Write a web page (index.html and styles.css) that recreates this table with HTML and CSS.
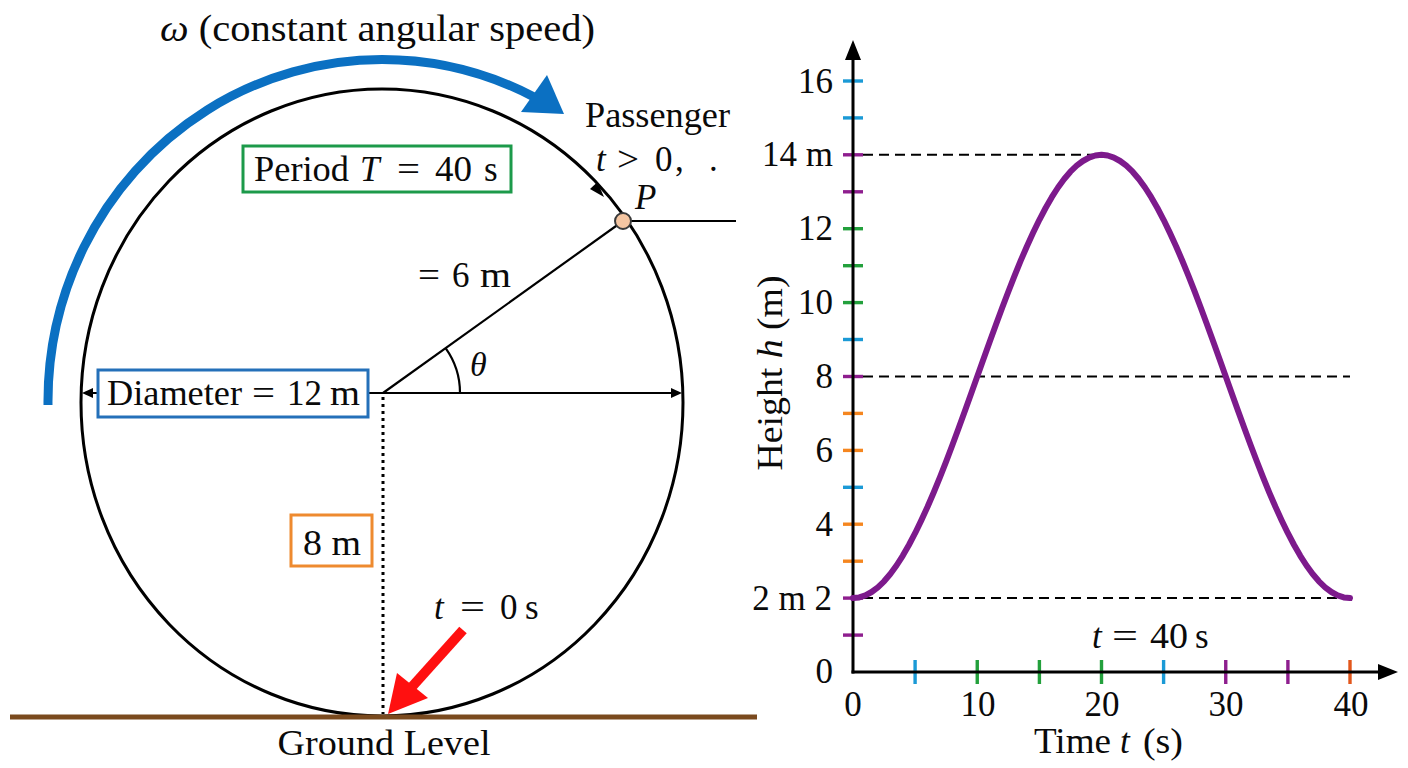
FILE: index.html
```html
<!DOCTYPE html>
<html lang="en">
<head>
<meta charset="utf-8">
<title>Ferris wheel height model</title>
<link rel="stylesheet" href="styles.css">
</head>
<body>
<div class="figure">
<svg class="canvas" width="1408" height="768" viewBox="0 0 1408 768" xmlns="http://www.w3.org/2000/svg">
  <!-- ===== Left: wheel ===== -->
  <text class="lbl title" x="160" y="41" textLength="435" lengthAdjust="spacingAndGlyphs"><tspan class="it">ω</tspan> (constant angular speed)</text>

  <path class="blue-arc" d="M 48 405 A 334 342 0 0 1 536 98"/>
  <polygon class="blue-fill" points="564,114 521,112 547,75"/>

  <ellipse class="wheel" cx="382" cy="402.5" rx="301" ry="313.5"/>
  <polygon class="black-fill" points="604,197 590,189 597.5,182"/>

  <line class="thin" x1="383" y1="393" x2="623" y2="221"/>
  <line class="thin" x1="631" y1="221" x2="736" y2="221"/>
  <path class="thin" d="M 460 393 A 77 77 0 0 0 445.6 348.2"/>

  <line class="thin" x1="90" y1="393" x2="674" y2="393"/>
  <polygon class="black-fill" points="82,393 93,388 93,398"/>
  <polygon class="black-fill" points="682,393 671,388 671,398"/>

  <line class="dotted" x1="383" y1="397" x2="383" y2="714"/>

  <circle class="pass" cx="623" cy="221" r="8"/>

  <!-- Period box -->
  <rect class="box box-green" x="243" y="146" width="268" height="46"/>
  <g class="lbl">
    <text x="254" y="181" textLength="95" lengthAdjust="spacingAndGlyphs">Period</text>
    <text class="it" x="360" y="181">T</text>
    <text x="397" y="181" textLength="23" lengthAdjust="spacingAndGlyphs">=</text>
    <text x="435" y="181" textLength="37" lengthAdjust="spacingAndGlyphs">40</text>
    <text x="484" y="181">s</text>
  </g>

  <!-- Diameter box -->
  <rect class="box box-blue" x="98" y="370" width="270" height="47"/>
  <g class="lbl">
    <text x="107" y="405" textLength="135" lengthAdjust="spacingAndGlyphs">Diameter</text>
    <text x="252" y="405" textLength="23" lengthAdjust="spacingAndGlyphs">=</text>
    <text x="287" y="405">12</text>
    <text x="330" y="405" textLength="30" lengthAdjust="spacingAndGlyphs">m</text>
  </g>

  <!-- 8 m box -->
  <rect class="box box-orange" x="291" y="515" width="81" height="51"/>
  <text class="lbl mid" x="332" y="555" textLength="58" lengthAdjust="spacingAndGlyphs">8 m</text>

  <!-- passenger labels -->
  <text class="lbl" x="585" y="127" textLength="145" lengthAdjust="spacingAndGlyphs">Passenger</text>
  <g class="lbl">
    <text class="it" x="596" y="171">t</text>
    <text x="617" y="171" textLength="22" lengthAdjust="spacingAndGlyphs">&gt;</text>
    <text x="655" y="171">0</text>
    <text x="675" y="171">,</text>
    <text x="709" y="171">.</text>
  </g>
  <text class="lbl it" x="635" y="209">P</text>

  <g class="lbl">
    <text x="418" y="287" textLength="22" lengthAdjust="spacingAndGlyphs">=</text>
    <text x="452" y="287">6</text>
    <text x="480" y="287" textLength="31" lengthAdjust="spacingAndGlyphs">m</text>
  </g>
  <text class="lbl it theta" x="470" y="376">θ</text>

  <!-- t = 0 s + red arrow -->
  <g class="lbl">
    <text class="it" x="434" y="619">t</text>
    <text x="460" y="619" textLength="25" lengthAdjust="spacingAndGlyphs">=</text>
    <text x="500" y="619">0</text>
    <text x="525" y="619">s</text>
  </g>
  <line class="red-shaft" x1="463" y1="630" x2="410" y2="689"/>
  <polygon class="red-fill" points="388,714 397,673 428,698"/>

  <line class="ground" x1="10" y1="717" x2="757" y2="717"/>
  <text class="lbl mid" x="384" y="755" textLength="213" lengthAdjust="spacingAndGlyphs">Ground Level</text>

  <!-- ===== Right: graph ===== -->
  <line class="dash" x1="863" y1="154.8" x2="1100" y2="154.8"/>
  <line class="dash" x1="863" y1="376.5" x2="1350" y2="376.5"/>
  <line class="dash" x1="863" y1="598.1" x2="1350" y2="598.1"/>

  <g class="ticks-y">
    <line class="t-purple" x1="843" y1="635.1" x2="863" y2="635.1"/>
    <line class="t-purple" x1="843" y1="598.1" x2="863" y2="598.1"/>
    <line class="t-orange" x1="843" y1="561.2" x2="863" y2="561.2"/>
    <line class="t-orange" x1="843" y1="524.2" x2="863" y2="524.2"/>
    <line class="t-blue" x1="843" y1="487.3" x2="863" y2="487.3"/>
    <line class="t-orange" x1="843" y1="450.4" x2="863" y2="450.4"/>
    <line class="t-orange" x1="843" y1="413.4" x2="863" y2="413.4"/>
    <line class="t-purple" x1="843" y1="376.5" x2="863" y2="376.5"/>
    <line class="t-blue" x1="843" y1="339.5" x2="863" y2="339.5"/>
    <line class="t-green" x1="843" y1="302.6" x2="863" y2="302.6"/>
    <line class="t-green" x1="843" y1="265.7" x2="863" y2="265.7"/>
    <line class="t-green" x1="843" y1="228.7" x2="863" y2="228.7"/>
    <line class="t-purple" x1="843" y1="191.8" x2="863" y2="191.8"/>
    <line class="t-purple" x1="843" y1="154.8" x2="863" y2="154.8"/>
    <line class="t-blue" x1="843" y1="117.9" x2="863" y2="117.9"/>
    <line class="t-blue" x1="843" y1="81" x2="863" y2="81"/>
  </g>
  <g class="ticks-x">
    <line class="t-blue" x1="915.1" y1="660" x2="915.1" y2="684"/>
    <line class="t-green" x1="977.25" y1="660" x2="977.25" y2="684"/>
    <line class="t-green" x1="1039.4" y1="660" x2="1039.4" y2="684"/>
    <line class="t-green" x1="1101.5" y1="660" x2="1101.5" y2="684"/>
    <line class="t-blue" x1="1163.6" y1="660" x2="1163.6" y2="684"/>
    <line class="t-purple" x1="1225.75" y1="660" x2="1225.75" y2="684"/>
    <line class="t-purple" x1="1287.9" y1="660" x2="1287.9" y2="684"/>
    <line class="t-red" x1="1350" y1="660" x2="1350" y2="684"/>
  </g>

  <line class="axis" x1="853" y1="673.5" x2="853" y2="56"/>
  <polygon class="black-fill" points="853,40 845,60 861,60"/>
  <line class="axis" x1="851.5" y1="672" x2="1382" y2="672"/>
  <polygon class="black-fill" points="1398,672 1378,664 1378,680"/>

  <polyline class="curve" points="853,598.1 859.2,597.4 865.4,595.4 871.6,592 877.85,587.3 884.1,581.3 890.3,574 896.5,565.5 902.7,555.8 908.9,545 915.1,533.2 921.3,520.4 927.55,506.8 933.8,492.3 940,477.1 946.2,461.3 952.4,445 958.6,428.3 964.8,411.2 971,393.9 977.25,376.5 983.5,359.1 989.7,341.8 995.9,324.7 1002.1,308 1008.3,291.7 1014.5,275.9 1020.7,260.7 1026.95,246.2 1033.2,232.6 1039.4,219.8 1045.6,208 1051.8,197.2 1058,187.5 1064.2,179 1070.4,171.7 1076.65,165.7 1082.9,161 1089.1,157.6 1095.3,155.5 1101.5,154.8 1107.7,155.5 1113.9,157.6 1120.1,161 1126.35,165.7 1132.6,171.7 1138.8,179 1145,187.5 1151.2,197.2 1157.4,208 1163.6,219.8 1169.8,232.6 1176.05,246.2 1182.3,260.7 1188.5,275.9 1194.7,291.7 1200.9,308 1207.1,324.7 1213.3,341.8 1219.5,359.1 1225.75,376.5 1232,393.9 1238.2,411.2 1244.4,428.3 1250.6,445 1256.8,461.3 1263,477.1 1269.2,492.3 1275.45,506.8 1281.7,520.4 1287.9,533.2 1294.1,545 1300.3,555.8 1306.5,565.5 1312.7,574 1318.9,581.3 1325.15,587.3 1331.4,592 1337.6,595.4 1343.8,597.4 1350,598.1"/>

  <g class="lbl end">
    <text x="833" y="93">16</text>
    <text x="833" y="166">14 m</text>
    <text x="833" y="240">12</text>
    <text x="833" y="314">10</text>
    <text x="833" y="388">8</text>
    <text x="833" y="462">6</text>
    <text x="833" y="536">4</text>
    <text x="832" y="610">2 m 2</text>
    <text x="833" y="683">0</text>
  </g>
  <g class="lbl mid">
    <text x="853" y="716">0</text>
    <text x="978" y="716">10</text>
    <text x="1102" y="716">20</text>
    <text x="1226" y="716">30</text>
    <text x="1351" y="716">40</text>
  </g>

  <g class="lbl">
    <text x="1034" y="753" textLength="77" lengthAdjust="spacingAndGlyphs">Time</text>
    <text class="it" x="1120" y="753">t</text>
    <text x="1143" y="753" textLength="40" lengthAdjust="spacingAndGlyphs">(s)</text>
  </g>

  <g class="lbl">
    <text class="it" x="1092" y="648">t</text>
    <text x="1112" y="648" textLength="26" lengthAdjust="spacingAndGlyphs">=</text>
    <text x="1150" y="648" textLength="38" lengthAdjust="spacingAndGlyphs">40</text>
    <text x="1195" y="648">s</text>
  </g>

  <text class="lbl mid" transform="translate(782 373) rotate(-90)" textLength="195" lengthAdjust="spacingAndGlyphs">Height <tspan class="it">h</tspan> (m)</text>
</svg>
</div>
</body>
</html>
```

FILE: styles.css
```css
html, body {
  margin: 0;
  padding: 0;
  background: #ffffff;
}

.figure {
  width: 1408px;
  height: 768px;
  overflow: hidden;
}

.canvas {
  display: block;
}

.lbl {
  font-family: "Liberation Serif", "Times New Roman", serif;
  font-size: 35px;
  fill: #0a0a0a;
}

.title {
  font-size: 37px;
}

.theta {
  font-size: 34px;
}

.it {
  font-style: italic;
}

.mid {
  text-anchor: middle;
}

.end {
  text-anchor: end;
}

.wheel {
  fill: none;
  stroke: #000000;
  stroke-width: 3;
}

.thin {
  fill: none;
  stroke: #000000;
  stroke-width: 2.2;
}

.black-fill {
  fill: #000000;
}

.blue-arc {
  fill: none;
  stroke: #0b70c2;
  stroke-width: 9;
}

.blue-fill {
  fill: #0b70c2;
}

.dotted {
  stroke: #000000;
  stroke-width: 3;
  stroke-dasharray: 3 4;
}

.pass {
  fill: #f5c6a2;
  stroke: #3a3a3a;
  stroke-width: 2;
}

.box {
  fill: #ffffff;
  stroke-width: 3;
}

.box-green {
  stroke: #1c9a4a;
}

.box-blue {
  stroke: #2470b9;
}

.box-orange {
  stroke: #ee8a2f;
}

.red-shaft {
  stroke: #ff1010;
  stroke-width: 10;
}

.red-fill {
  fill: #ff1010;
}

.ground {
  stroke: #7a4a1e;
  stroke-width: 5;
}

.dash {
  stroke: #000000;
  stroke-width: 2;
  stroke-dasharray: 10 6;
}

.ticks-y line,
.ticks-x line {
  stroke-width: 3.4;
}

.t-blue { stroke: #1b9ad6; }
.t-green { stroke: #23a03c; }
.t-purple { stroke: #8e1e8e; }
.t-orange { stroke: #f5861f; }
.t-red { stroke: #e2571c; }

.axis {
  stroke: #000000;
  stroke-width: 3;
}

.curve {
  fill: none;
  stroke: #7d1a8c;
  stroke-width: 6;
  stroke-linejoin: round;
  stroke-linecap: round;
}
```
